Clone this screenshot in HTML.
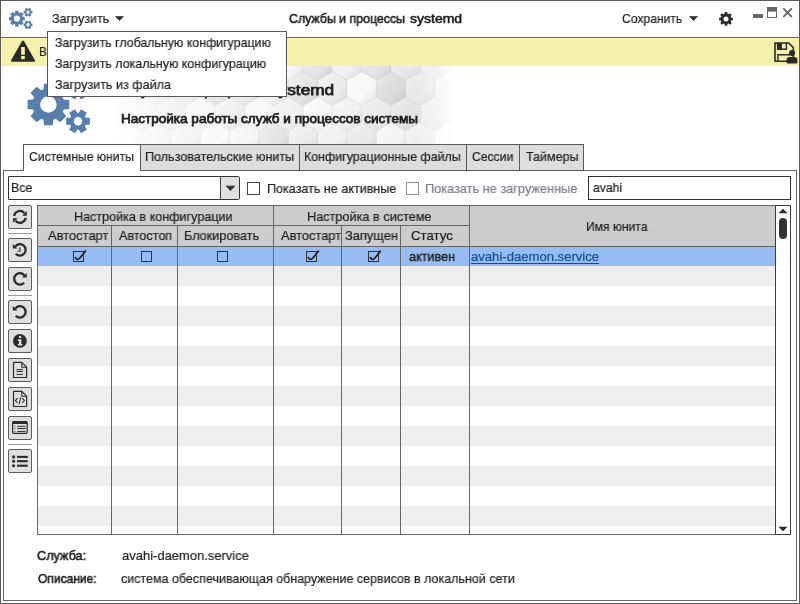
<!DOCTYPE html>
<html lang="ru"><head><meta charset="utf-8"><title>Службы и процессы systemd</title>
<style>
html,body{margin:0;padding:0;background:#fff;}
body{width:800px;height:604px;position:relative;overflow:hidden;font-family:"Liberation Sans", sans-serif;font-size:13px;color:#222;}
.a{position:absolute;box-sizing:border-box;}
.t{position:absolute;white-space:nowrap;line-height:16px;height:16px;transform-origin:0 0;will-change:transform;}
.btn{position:absolute;box-sizing:border-box;left:8px;width:24px;height:24px;background:#dfdfdf;border:1px solid #5c5c5c;border-radius:2px;}
.sep{position:absolute;left:8px;width:24px;height:1px;background:#999;}
.cb{position:absolute;box-sizing:border-box;width:11px;height:11px;border:1px solid #333;}
.vl{position:absolute;width:1px;background:#666;}
.hl{position:absolute;height:1px;background:#666;}
</style></head><body>
<div class="a" style="left:0;top:0;width:800px;height:604px;border:1px solid #5c5c5c;"></div>
<div class="hl" style="left:1px;top:37px;width:798px;background:#666"></div>
<div class="a" style="left:1px;top:38px;width:798px;height:28px;background:#f5f0aa;border-top:1px solid #fbf8b4;border-left:1px solid #fbf8b4"></div>
<svg class="a" style="left:100px;top:66px" width="360" height="78" viewBox="0 0 360 78"><defs><linearGradient id="hg" x1="0" y1="0" x2="1" y2="1"><stop offset="0" stop-color="#fff" stop-opacity=".45"/><stop offset=".5" stop-color="#fff" stop-opacity="0"/><stop offset=".6" stop-color="#000" stop-opacity="0"/><stop offset="1" stop-color="#000" stop-opacity=".08"/></linearGradient><linearGradient id="fade" x1="0" y1="0" x2="1" y2="0"><stop offset="0" stop-color="#fff" stop-opacity="1"/><stop offset="0.03" stop-color="#fff" stop-opacity="1"/><stop offset="0.16" stop-color="#fff" stop-opacity=".55"/><stop offset="0.40" stop-color="#fff" stop-opacity=".15"/><stop offset="0.60" stop-color="#fff" stop-opacity="0"/><stop offset="0.87" stop-color="#fff" stop-opacity="0"/><stop offset="0.93" stop-color="#fff" stop-opacity=".5"/><stop offset="0.985" stop-color="#fff" stop-opacity="1"/><stop offset="1" stop-color="#fff" stop-opacity="1"/></linearGradient></defs><rect width="360" height="78" fill="#ececec"/><polygon points="27.3,5.9 12.7,14.3 -2.0,5.9 -2.0,-11.1 12.6,-19.5 27.3,-11.1" fill="#f7f7f7"/><polygon points="27.3,5.9 12.7,14.3 -2.0,5.9 -2.0,-11.1 12.6,-19.5 27.3,-11.1" fill="url(#hg)" stroke="#000" stroke-opacity=".05" stroke-width="0.8"/><polygon points="56.6,5.9 42.0,14.3 27.3,5.9 27.3,-11.1 42.0,-19.5 56.6,-11.1" fill="#ececec"/><polygon points="56.6,5.9 42.0,14.3 27.3,5.9 27.3,-11.1 42.0,-19.5 56.6,-11.1" fill="url(#hg)" stroke="#000" stroke-opacity=".05" stroke-width="0.8"/><polygon points="85.9,5.9 71.2,14.3 56.6,5.9 56.6,-11.1 71.2,-19.5 85.9,-11.1" fill="#e7e7e7"/><polygon points="85.9,5.9 71.2,14.3 56.6,5.9 56.6,-11.1 71.2,-19.5 85.9,-11.1" fill="url(#hg)" stroke="#000" stroke-opacity=".05" stroke-width="0.8"/><polygon points="115.2,5.9 100.5,14.3 85.9,5.9 85.9,-11.1 100.5,-19.5 115.2,-11.1" fill="#e4e4e4"/><polygon points="115.2,5.9 100.5,14.3 85.9,5.9 85.9,-11.1 100.5,-19.5 115.2,-11.1" fill="url(#hg)" stroke="#000" stroke-opacity=".05" stroke-width="0.8"/><polygon points="144.5,5.9 129.8,14.3 115.2,5.9 115.2,-11.1 129.8,-19.5 144.5,-11.1" fill="#e9e9e9"/><polygon points="144.5,5.9 129.8,14.3 115.2,5.9 115.2,-11.1 129.8,-19.5 144.5,-11.1" fill="url(#hg)" stroke="#000" stroke-opacity=".05" stroke-width="0.8"/><polygon points="173.8,5.9 159.2,14.3 144.5,5.9 144.5,-11.1 159.2,-19.5 173.8,-11.1" fill="#e9e9e9"/><polygon points="173.8,5.9 159.2,14.3 144.5,5.9 144.5,-11.1 159.2,-19.5 173.8,-11.1" fill="url(#hg)" stroke="#000" stroke-opacity=".05" stroke-width="0.8"/><polygon points="203.1,5.9 188.5,14.3 173.8,5.9 173.8,-11.1 188.5,-19.5 203.1,-11.1" fill="#f7f7f7"/><polygon points="203.1,5.9 188.5,14.3 173.8,5.9 173.8,-11.1 188.5,-19.5 203.1,-11.1" fill="url(#hg)" stroke="#000" stroke-opacity=".05" stroke-width="0.8"/><polygon points="232.4,5.9 217.8,14.3 203.1,5.9 203.1,-11.1 217.8,-19.5 232.4,-11.1" fill="#e4e4e4"/><polygon points="232.4,5.9 217.8,14.3 203.1,5.9 203.1,-11.1 217.8,-19.5 232.4,-11.1" fill="url(#hg)" stroke="#000" stroke-opacity=".05" stroke-width="0.8"/><polygon points="261.7,5.9 247.1,14.3 232.4,5.9 232.4,-11.1 247.1,-19.5 261.7,-11.1" fill="#f0f0f0"/><polygon points="261.7,5.9 247.1,14.3 232.4,5.9 232.4,-11.1 247.1,-19.5 261.7,-11.1" fill="url(#hg)" stroke="#000" stroke-opacity=".05" stroke-width="0.8"/><polygon points="291.0,5.9 276.4,14.3 261.7,5.9 261.7,-11.1 276.4,-19.5 291.0,-11.1" fill="#e4e4e4"/><polygon points="291.0,5.9 276.4,14.3 261.7,5.9 261.7,-11.1 276.4,-19.5 291.0,-11.1" fill="url(#hg)" stroke="#000" stroke-opacity=".05" stroke-width="0.8"/><polygon points="320.3,5.9 305.7,14.3 291.0,5.9 291.0,-11.1 305.7,-19.5 320.3,-11.1" fill="#e9e9e9"/><polygon points="320.3,5.9 305.7,14.3 291.0,5.9 291.0,-11.1 305.7,-19.5 320.3,-11.1" fill="url(#hg)" stroke="#000" stroke-opacity=".05" stroke-width="0.8"/><polygon points="349.6,5.9 335.0,14.3 320.3,5.9 320.3,-11.1 335.0,-19.5 349.6,-11.1" fill="#e7e7e7"/><polygon points="349.6,5.9 335.0,14.3 320.3,5.9 320.3,-11.1 335.0,-19.5 349.6,-11.1" fill="url(#hg)" stroke="#000" stroke-opacity=".05" stroke-width="0.8"/><polygon points="378.9,5.9 364.3,14.3 349.6,5.9 349.6,-11.1 364.3,-19.5 378.9,-11.1" fill="#e7e7e7"/><polygon points="378.9,5.9 364.3,14.3 349.6,5.9 349.6,-11.1 364.3,-19.5 378.9,-11.1" fill="url(#hg)" stroke="#000" stroke-opacity=".05" stroke-width="0.8"/><polygon points="12.7,31.2 -2.0,39.7 -16.6,31.2 -16.7,14.3 -2.0,5.9 12.7,14.3" fill="#e9e9e9"/><polygon points="12.7,31.2 -2.0,39.7 -16.6,31.2 -16.7,14.3 -2.0,5.9 12.7,14.3" fill="url(#hg)" stroke="#000" stroke-opacity=".05" stroke-width="0.8"/><polygon points="42.0,31.2 27.3,39.7 12.7,31.2 12.6,14.3 27.3,5.9 42.0,14.3" fill="#f0f0f0"/><polygon points="42.0,31.2 27.3,39.7 12.7,31.2 12.6,14.3 27.3,5.9 42.0,14.3" fill="url(#hg)" stroke="#000" stroke-opacity=".05" stroke-width="0.8"/><polygon points="71.2,31.2 56.6,39.7 42.0,31.2 41.9,14.3 56.6,5.9 71.2,14.3" fill="#e9e9e9"/><polygon points="71.2,31.2 56.6,39.7 42.0,31.2 41.9,14.3 56.6,5.9 71.2,14.3" fill="url(#hg)" stroke="#000" stroke-opacity=".05" stroke-width="0.8"/><polygon points="100.6,31.2 85.9,39.7 71.3,31.2 71.2,14.3 85.9,5.9 100.6,14.3" fill="#e7e7e7"/><polygon points="100.6,31.2 85.9,39.7 71.3,31.2 71.2,14.3 85.9,5.9 100.6,14.3" fill="url(#hg)" stroke="#000" stroke-opacity=".05" stroke-width="0.8"/><polygon points="129.8,31.2 115.2,39.7 100.6,31.2 100.5,14.3 115.2,5.9 129.8,14.3" fill="#e0e0e0"/><polygon points="129.8,31.2 115.2,39.7 100.6,31.2 100.5,14.3 115.2,5.9 129.8,14.3" fill="url(#hg)" stroke="#000" stroke-opacity=".05" stroke-width="0.8"/><polygon points="159.2,31.2 144.5,39.7 129.8,31.2 129.8,14.3 144.5,5.9 159.2,14.3" fill="#e9e9e9"/><polygon points="159.2,31.2 144.5,39.7 129.8,31.2 129.8,14.3 144.5,5.9 159.2,14.3" fill="url(#hg)" stroke="#000" stroke-opacity=".05" stroke-width="0.8"/><polygon points="188.5,31.2 173.8,39.7 159.2,31.2 159.2,14.3 173.8,5.9 188.5,14.3" fill="#f0f0f0"/><polygon points="188.5,31.2 173.8,39.7 159.2,31.2 159.2,14.3 173.8,5.9 188.5,14.3" fill="url(#hg)" stroke="#000" stroke-opacity=".05" stroke-width="0.8"/><polygon points="217.8,31.2 203.1,39.7 188.5,31.2 188.5,14.3 203.1,5.9 217.8,14.3" fill="#e4e4e4"/><polygon points="217.8,31.2 203.1,39.7 188.5,31.2 188.5,14.3 203.1,5.9 217.8,14.3" fill="url(#hg)" stroke="#000" stroke-opacity=".05" stroke-width="0.8"/><polygon points="247.1,31.2 232.4,39.7 217.8,31.2 217.8,14.3 232.4,5.9 247.1,14.3" fill="#ececec"/><polygon points="247.1,31.2 232.4,39.7 217.8,31.2 217.8,14.3 232.4,5.9 247.1,14.3" fill="url(#hg)" stroke="#000" stroke-opacity=".05" stroke-width="0.8"/><polygon points="276.4,31.2 261.7,39.7 247.1,31.2 247.1,14.3 261.7,5.9 276.4,14.3" fill="#f8f8f8"/><polygon points="276.4,31.2 261.7,39.7 247.1,31.2 247.1,14.3 261.7,5.9 276.4,14.3" fill="url(#hg)" stroke="#000" stroke-opacity=".05" stroke-width="0.8"/><polygon points="305.7,31.2 291.0,39.7 276.4,31.2 276.4,14.3 291.0,5.9 305.7,14.3" fill="#dcdcdc"/><polygon points="305.7,31.2 291.0,39.7 276.4,31.2 276.4,14.3 291.0,5.9 305.7,14.3" fill="url(#hg)" stroke="#000" stroke-opacity=".05" stroke-width="0.8"/><polygon points="335.0,31.2 320.3,39.7 305.7,31.2 305.7,14.3 320.3,5.9 335.0,14.3" fill="#e6e6e6"/><polygon points="335.0,31.2 320.3,39.7 305.7,31.2 305.7,14.3 320.3,5.9 335.0,14.3" fill="url(#hg)" stroke="#000" stroke-opacity=".05" stroke-width="0.8"/><polygon points="364.3,31.2 349.6,39.7 335.0,31.2 335.0,14.3 349.6,5.9 364.3,14.3" fill="#ececec"/><polygon points="364.3,31.2 349.6,39.7 335.0,31.2 335.0,14.3 349.6,5.9 364.3,14.3" fill="url(#hg)" stroke="#000" stroke-opacity=".05" stroke-width="0.8"/><polygon points="393.6,31.2 378.9,39.7 364.3,31.2 364.3,14.3 378.9,5.9 393.6,14.3" fill="#f4f4f4"/><polygon points="393.6,31.2 378.9,39.7 364.3,31.2 364.3,14.3 378.9,5.9 393.6,14.3" fill="url(#hg)" stroke="#000" stroke-opacity=".05" stroke-width="0.8"/><polygon points="27.3,56.6 12.7,65.1 -2.0,56.6 -2.0,39.7 12.6,31.2 27.3,39.7" fill="#e7e7e7"/><polygon points="27.3,56.6 12.7,65.1 -2.0,56.6 -2.0,39.7 12.6,31.2 27.3,39.7" fill="url(#hg)" stroke="#000" stroke-opacity=".05" stroke-width="0.8"/><polygon points="56.6,56.6 42.0,65.1 27.3,56.6 27.3,39.7 42.0,31.2 56.6,39.7" fill="#ececec"/><polygon points="56.6,56.6 42.0,65.1 27.3,56.6 27.3,39.7 42.0,31.2 56.6,39.7" fill="url(#hg)" stroke="#000" stroke-opacity=".05" stroke-width="0.8"/><polygon points="85.9,56.6 71.2,65.1 56.6,56.6 56.6,39.7 71.2,31.2 85.9,39.7" fill="#e9e9e9"/><polygon points="85.9,56.6 71.2,65.1 56.6,56.6 56.6,39.7 71.2,31.2 85.9,39.7" fill="url(#hg)" stroke="#000" stroke-opacity=".05" stroke-width="0.8"/><polygon points="115.2,56.6 100.5,65.1 85.9,56.6 85.9,39.7 100.5,31.2 115.2,39.7" fill="#f4f4f4"/><polygon points="115.2,56.6 100.5,65.1 85.9,56.6 85.9,39.7 100.5,31.2 115.2,39.7" fill="url(#hg)" stroke="#000" stroke-opacity=".05" stroke-width="0.8"/><polygon points="144.5,56.6 129.8,65.1 115.2,56.6 115.2,39.7 129.8,31.2 144.5,39.7" fill="#ececec"/><polygon points="144.5,56.6 129.8,65.1 115.2,56.6 115.2,39.7 129.8,31.2 144.5,39.7" fill="url(#hg)" stroke="#000" stroke-opacity=".05" stroke-width="0.8"/><polygon points="173.8,56.6 159.2,65.1 144.5,56.6 144.5,39.7 159.2,31.2 173.8,39.7" fill="#f6f6f6"/><polygon points="173.8,56.6 159.2,65.1 144.5,56.6 144.5,39.7 159.2,31.2 173.8,39.7" fill="url(#hg)" stroke="#000" stroke-opacity=".05" stroke-width="0.8"/><polygon points="203.1,56.6 188.5,65.1 173.8,56.6 173.8,39.7 188.5,31.2 203.1,39.7" fill="#f0f0f0"/><polygon points="203.1,56.6 188.5,65.1 173.8,56.6 173.8,39.7 188.5,31.2 203.1,39.7" fill="url(#hg)" stroke="#000" stroke-opacity=".05" stroke-width="0.8"/><polygon points="232.4,56.6 217.8,65.1 203.1,56.6 203.1,39.7 217.8,31.2 232.4,39.7" fill="#f7f7f7"/><polygon points="232.4,56.6 217.8,65.1 203.1,56.6 203.1,39.7 217.8,31.2 232.4,39.7" fill="url(#hg)" stroke="#000" stroke-opacity=".05" stroke-width="0.8"/><polygon points="261.7,56.6 247.1,65.1 232.4,56.6 232.4,39.7 247.1,31.2 261.7,39.7" fill="#f1f1f1"/><polygon points="261.7,56.6 247.1,65.1 232.4,56.6 232.4,39.7 247.1,31.2 261.7,39.7" fill="url(#hg)" stroke="#000" stroke-opacity=".05" stroke-width="0.8"/><polygon points="291.0,56.6 276.4,65.1 261.7,56.6 261.7,39.7 276.4,31.2 291.0,39.7" fill="#eaeaea"/><polygon points="291.0,56.6 276.4,65.1 261.7,56.6 261.7,39.7 276.4,31.2 291.0,39.7" fill="url(#hg)" stroke="#000" stroke-opacity=".05" stroke-width="0.8"/><polygon points="320.3,56.6 305.7,65.1 291.0,56.6 291.0,39.7 305.7,31.2 320.3,39.7" fill="#e3e3e3"/><polygon points="320.3,56.6 305.7,65.1 291.0,56.6 291.0,39.7 305.7,31.2 320.3,39.7" fill="url(#hg)" stroke="#000" stroke-opacity=".05" stroke-width="0.8"/><polygon points="349.6,56.6 335.0,65.1 320.3,56.6 320.3,39.7 335.0,31.2 349.6,39.7" fill="#e8e8e8"/><polygon points="349.6,56.6 335.0,65.1 320.3,56.6 320.3,39.7 335.0,31.2 349.6,39.7" fill="url(#hg)" stroke="#000" stroke-opacity=".05" stroke-width="0.8"/><polygon points="378.9,56.6 364.3,65.1 349.6,56.6 349.6,39.7 364.3,31.2 378.9,39.7" fill="#eeeeee"/><polygon points="378.9,56.6 364.3,65.1 349.6,56.6 349.6,39.7 364.3,31.2 378.9,39.7" fill="url(#hg)" stroke="#000" stroke-opacity=".05" stroke-width="0.8"/><polygon points="12.7,82.0 -2.0,90.4 -16.6,82.0 -16.7,65.1 -2.0,56.6 12.7,65.1" fill="#e7e7e7"/><polygon points="12.7,82.0 -2.0,90.4 -16.6,82.0 -16.7,65.1 -2.0,56.6 12.7,65.1" fill="url(#hg)" stroke="#000" stroke-opacity=".05" stroke-width="0.8"/><polygon points="42.0,82.0 27.3,90.4 12.7,82.0 12.6,65.1 27.3,56.6 42.0,65.1" fill="#f7f7f7"/><polygon points="42.0,82.0 27.3,90.4 12.7,82.0 12.6,65.1 27.3,56.6 42.0,65.1" fill="url(#hg)" stroke="#000" stroke-opacity=".05" stroke-width="0.8"/><polygon points="71.2,82.0 56.6,90.4 42.0,82.0 41.9,65.1 56.6,56.6 71.2,65.1" fill="#eeeeee"/><polygon points="71.2,82.0 56.6,90.4 42.0,82.0 41.9,65.1 56.6,56.6 71.2,65.1" fill="url(#hg)" stroke="#000" stroke-opacity=".05" stroke-width="0.8"/><polygon points="100.6,82.0 85.9,90.4 71.3,82.0 71.2,65.1 85.9,56.6 100.6,65.1" fill="#eeeeee"/><polygon points="100.6,82.0 85.9,90.4 71.3,82.0 71.2,65.1 85.9,56.6 100.6,65.1" fill="url(#hg)" stroke="#000" stroke-opacity=".05" stroke-width="0.8"/><polygon points="129.8,82.0 115.2,90.4 100.6,82.0 100.5,65.1 115.2,56.6 129.8,65.1" fill="#f7f7f7"/><polygon points="129.8,82.0 115.2,90.4 100.6,82.0 100.5,65.1 115.2,56.6 129.8,65.1" fill="url(#hg)" stroke="#000" stroke-opacity=".05" stroke-width="0.8"/><polygon points="159.2,82.0 144.5,90.4 129.8,82.0 129.8,65.1 144.5,56.6 159.2,65.1" fill="#f4f4f4"/><polygon points="159.2,82.0 144.5,90.4 129.8,82.0 129.8,65.1 144.5,56.6 159.2,65.1" fill="url(#hg)" stroke="#000" stroke-opacity=".05" stroke-width="0.8"/><polygon points="188.5,82.0 173.8,90.4 159.2,82.0 159.2,65.1 173.8,56.6 188.5,65.1" fill="#e2e2e2"/><polygon points="188.5,82.0 173.8,90.4 159.2,82.0 159.2,65.1 173.8,56.6 188.5,65.1" fill="url(#hg)" stroke="#000" stroke-opacity=".05" stroke-width="0.8"/><polygon points="217.8,82.0 203.1,90.4 188.5,82.0 188.5,65.1 203.1,56.6 217.8,65.1" fill="#ececec"/><polygon points="217.8,82.0 203.1,90.4 188.5,82.0 188.5,65.1 203.1,56.6 217.8,65.1" fill="url(#hg)" stroke="#000" stroke-opacity=".05" stroke-width="0.8"/><polygon points="247.1,82.0 232.4,90.4 217.8,82.0 217.8,65.1 232.4,56.6 247.1,65.1" fill="#f0f0f0"/><polygon points="247.1,82.0 232.4,90.4 217.8,82.0 217.8,65.1 232.4,56.6 247.1,65.1" fill="url(#hg)" stroke="#000" stroke-opacity=".05" stroke-width="0.8"/><polygon points="276.4,82.0 261.7,90.4 247.1,82.0 247.1,65.1 261.7,56.6 276.4,65.1" fill="#e9e9e9"/><polygon points="276.4,82.0 261.7,90.4 247.1,82.0 247.1,65.1 261.7,56.6 276.4,65.1" fill="url(#hg)" stroke="#000" stroke-opacity=".05" stroke-width="0.8"/><polygon points="305.7,82.0 291.0,90.4 276.4,82.0 276.4,65.1 291.0,56.6 305.7,65.1" fill="#f4f4f4"/><polygon points="305.7,82.0 291.0,90.4 276.4,82.0 276.4,65.1 291.0,56.6 305.7,65.1" fill="url(#hg)" stroke="#000" stroke-opacity=".05" stroke-width="0.8"/><polygon points="335.0,82.0 320.3,90.4 305.7,82.0 305.7,65.1 320.3,56.6 335.0,65.1" fill="#eeeeee"/><polygon points="335.0,82.0 320.3,90.4 305.7,82.0 305.7,65.1 320.3,56.6 335.0,65.1" fill="url(#hg)" stroke="#000" stroke-opacity=".05" stroke-width="0.8"/><polygon points="364.3,82.0 349.6,90.4 335.0,82.0 335.0,65.1 349.6,56.6 364.3,65.1" fill="#f7f7f7"/><polygon points="364.3,82.0 349.6,90.4 335.0,82.0 335.0,65.1 349.6,56.6 364.3,65.1" fill="url(#hg)" stroke="#000" stroke-opacity=".05" stroke-width="0.8"/><polygon points="393.6,82.0 378.9,90.4 364.3,82.0 364.3,65.1 378.9,56.6 393.6,65.1" fill="#eeeeee"/><polygon points="393.6,82.0 378.9,90.4 364.3,82.0 364.3,65.1 378.9,56.6 393.6,65.1" fill="url(#hg)" stroke="#000" stroke-opacity=".05" stroke-width="0.8"/><rect width="360" height="78" fill="url(#fade)"/></svg>
<div class="a" style="left:3px;top:170px;width:794px;height:431px;border:1px solid #666;"></div>
<div class="a" style="left:140px;top:144px;width:444px;height:27px;background:#dddddd;border:1px solid #5a5a5a;"></div>
<div class="vl" style="left:299px;top:145px;height:25px;background:#5a5a5a"></div>
<div class="vl" style="left:466px;top:145px;height:25px;background:#5a5a5a"></div>
<div class="vl" style="left:519px;top:145px;height:25px;background:#5a5a5a"></div>
<div class="a" style="left:23px;top:144px;width:118px;height:27px;background:#fff;border:1px solid #5a5a5a;border-bottom:none;"></div>
<div class="a" style="left:8px;top:176px;width:232px;height:24px;background:#fff;border:1px solid #333;border-radius:0 2px 2px 0;"></div>
<div class="a" style="left:220px;top:177px;width:19px;height:22px;background:#dedede;border-left:1px solid #444;border-radius:0 1px 1px 0;"></div>
<svg class="a" style="left:225px;top:185px" width="11" height="7" viewBox="0 0 11 7"><path d="M0.5,0.8 L10.5,0.8 L5.5,6 Z" fill="#333"/></svg>
<div class="a" style="left:247px;top:182px;width:13px;height:13px;background:#fff;border:1px solid #444;"></div>
<div class="a" style="left:406px;top:182px;width:13px;height:13px;background:#fff;border:1px solid #8c8c9a;"></div>
<div class="a" style="left:588px;top:176px;width:203px;height:24px;background:#fff;border:1px solid #333;"></div>
<div class="btn" style="top:205px"></div>
<div class="btn" style="top:238px"></div>
<div class="btn" style="top:267px"></div>
<div class="btn" style="top:300px"></div>
<div class="btn" style="top:329px"></div>
<div class="btn" style="top:358px"></div>
<div class="btn" style="top:387px"></div>
<div class="btn" style="top:416px"></div>
<div class="btn" style="top:449px"></div>
<div class="sep" style="top:233px"></div>
<div class="sep" style="top:295px"></div>
<div class="sep" style="top:444px"></div>
<div class="a" style="left:37px;top:205px;width:754px;height:330px;background:#fff;border:1px solid #666;"></div>
<div class="a" style="left:38px;top:206px;width:737px;height:40px;background:#cccccc;"></div>
<div class="a" style="left:38px;top:247px;width:737px;height:19px;background:#96bcf2;"></div>
<div class="a" style="left:38px;top:266px;width:737px;height:20px;background:#eeeeee;"></div>
<div class="a" style="left:38px;top:306px;width:737px;height:20px;background:#eeeeee;"></div>
<div class="a" style="left:38px;top:346px;width:737px;height:20px;background:#eeeeee;"></div>
<div class="a" style="left:38px;top:386px;width:737px;height:20px;background:#eeeeee;"></div>
<div class="a" style="left:38px;top:426px;width:737px;height:20px;background:#eeeeee;"></div>
<div class="a" style="left:38px;top:466px;width:737px;height:20px;background:#eeeeee;"></div>
<div class="a" style="left:38px;top:506px;width:737px;height:20px;background:#eeeeee;"></div>
<div class="hl" style="left:38px;top:225px;width:431px"></div>
<div class="hl" style="left:38px;top:246px;width:737px"></div>
<div class="vl" style="left:273px;top:206px;height:328px"></div>
<div class="vl" style="left:469px;top:206px;height:328px"></div>
<div class="vl" style="left:111px;top:226px;height:308px"></div>
<div class="vl" style="left:177px;top:226px;height:308px"></div>
<div class="vl" style="left:341px;top:226px;height:308px"></div>
<div class="vl" style="left:400px;top:226px;height:308px"></div>
<div class="a" style="left:775px;top:205px;width:16px;height:330px;background:#fff;border:1px solid #3c3c3c;"></div>
<svg class="a" style="left:778px;top:208px" width="10" height="6" viewBox="0 0 10 6"><path d="M0.9,5 L5,0.9 L9.1,5Z" fill="#2b2b2b" stroke="#2b2b2b" stroke-width="0.5" stroke-linejoin="round"/></svg>
<svg class="a" style="left:778px;top:526px" width="10" height="6" viewBox="0 0 10 6"><path d="M0.9,1 L5,5.1 L9.1,1Z" fill="#2b2b2b" stroke="#2b2b2b" stroke-width="0.5" stroke-linejoin="round"/></svg>
<div class="a" style="left:779px;top:218px;width:8px;height:21px;background:#333;border-radius:4px;"></div>
<div class="cb" style="left:73px;top:251px"></div>
<svg class="a" style="left:73px;top:248px" width="15" height="15" viewBox="0 0 15 15"><path d="M2.5,9.6 C3.2,11.3 4.6,11.9 5.9,10.9 C7.7,9.4 10,6.2 12.4,3.1" fill="none" stroke="#222" stroke-width="1.8" stroke-linecap="round"/></svg>
<div class="cb" style="left:141px;top:251px"></div>
<div class="cb" style="left:217px;top:251px"></div>
<div class="cb" style="left:306px;top:251px"></div>
<svg class="a" style="left:306px;top:248px" width="15" height="15" viewBox="0 0 15 15"><path d="M2.5,9.6 C3.2,11.3 4.6,11.9 5.9,10.9 C7.7,9.4 10,6.2 12.4,3.1" fill="none" stroke="#222" stroke-width="1.8" stroke-linecap="round"/></svg>
<div class="cb" style="left:368px;top:251px"></div>
<svg class="a" style="left:368px;top:248px" width="15" height="15" viewBox="0 0 15 15"><path d="M2.5,9.6 C3.2,11.3 4.6,11.9 5.9,10.9 C7.7,9.4 10,6.2 12.4,3.1" fill="none" stroke="#222" stroke-width="1.8" stroke-linecap="round"/></svg>
<svg class="a" style="left:115px;top:16px" width="9" height="6" viewBox="0 0 9 6"><path d="M0.5,0.4 L8.5,0.4 L4.5,4.6Z" fill="#303030" stroke="#303030" stroke-width="0.7" stroke-linejoin="round"/></svg>
<svg class="a" style="left:689px;top:16px" width="9" height="6" viewBox="0 0 9 6"><path d="M0.5,0.4 L8.5,0.4 L4.5,4.6Z" fill="#303030" stroke="#303030" stroke-width="0.7" stroke-linejoin="round"/></svg>
<svg class="a" style="left:0;top:0" width="800" height="604" viewBox="0 0 800 604"><path d="M63.71,99.52 L69.24,100.12 L69.24,108.88 L63.71,109.48 L62.75,111.81 L66.24,116.14 L60.04,122.34 L55.71,118.85 L53.38,119.81 L52.78,125.34 L44.02,125.34 L43.42,119.81 L41.09,118.85 L36.76,122.34 L30.56,116.14 L34.05,111.81 L33.09,109.48 L27.56,108.88 L27.56,100.12 L33.09,99.52 L34.05,97.19 L30.56,92.86 L36.76,86.66 L41.09,90.15 L43.42,89.19 L44.02,83.66 L52.78,83.66 L53.38,89.19 L55.71,90.15 L60.04,86.66 L66.24,92.86 L62.75,97.19Z M56.70,104.50 A8.30,8.30 0 1,0 40.10,104.50 A8.30,8.30 0 1,0 56.70,104.50Z M85.86,117.70 L89.80,117.74 L89.80,124.66 L85.86,124.70 L84.96,126.25 L86.90,129.69 L80.91,133.15 L78.90,129.75 L77.10,129.75 L75.09,133.15 L69.10,129.69 L71.04,126.25 L70.14,124.70 L66.20,124.66 L66.20,117.74 L70.14,117.70 L71.04,116.15 L69.10,112.71 L75.09,109.25 L77.10,112.65 L78.90,112.65 L80.91,109.25 L86.90,112.71 L84.96,116.15Z M82.20,121.20 A4.20,4.20 0 1,0 73.80,121.20 A4.20,4.20 0 1,0 82.20,121.20Z M85.86,84.00 L89.80,84.04 L89.80,90.96 L85.86,91.00 L84.96,92.55 L86.90,95.99 L80.91,99.45 L78.90,96.05 L77.10,96.05 L75.09,99.45 L69.10,95.99 L71.04,92.55 L70.14,91.00 L66.20,90.96 L66.20,84.04 L70.14,84.00 L71.04,82.45 L69.10,79.01 L75.09,75.55 L77.10,78.95 L78.90,78.95 L80.91,75.55 L86.90,79.01 L84.96,82.45Z M82.20,87.50 A4.20,4.20 0 1,0 73.80,87.50 A4.20,4.20 0 1,0 82.20,87.50Z" fill="#587eab" fill-rule="evenodd"/><path d="M22.64,16.73 L24.72,16.96 L24.72,20.24 L22.64,20.47 L22.28,21.34 L23.59,22.96 L21.26,25.29 L19.64,23.98 L18.77,24.34 L18.54,26.42 L15.26,26.42 L15.03,24.34 L14.16,23.98 L12.54,25.29 L10.21,22.96 L11.52,21.34 L11.16,20.47 L9.08,20.24 L9.08,16.96 L11.16,16.73 L11.52,15.86 L10.21,14.24 L12.54,11.91 L14.16,13.22 L15.03,12.86 L15.26,10.78 L18.54,10.78 L18.77,12.86 L19.64,13.22 L21.26,11.91 L23.59,14.24 L22.28,15.86Z M20.01,18.60 A3.11,3.11 0 1,0 13.79,18.60 A3.11,3.11 0 1,0 20.01,18.60Z M30.95,23.55 L32.43,23.57 L32.43,26.16 L30.95,26.17 L30.61,26.76 L31.34,28.05 L29.09,29.34 L28.34,28.07 L27.66,28.07 L26.91,29.34 L24.66,28.05 L25.39,26.76 L25.05,26.17 L23.57,26.16 L23.57,23.57 L25.05,23.55 L25.39,22.97 L24.66,21.68 L26.91,20.38 L27.66,21.66 L28.34,21.66 L29.09,20.38 L31.34,21.68 L30.61,22.97Z M29.57,24.86 A1.58,1.58 0 1,0 26.43,24.86 A1.58,1.58 0 1,0 29.57,24.86Z M30.95,10.91 L32.43,10.93 L32.43,13.52 L30.95,13.54 L30.61,14.12 L31.34,15.41 L29.09,16.71 L28.34,15.43 L27.66,15.43 L26.91,16.71 L24.66,15.41 L25.39,14.12 L25.05,13.54 L23.57,13.52 L23.57,10.93 L25.05,10.91 L25.39,10.33 L24.66,9.04 L26.91,7.74 L27.66,9.02 L28.34,9.02 L29.09,7.74 L31.34,9.04 L30.61,10.33Z M29.57,12.23 A1.58,1.58 0 1,0 26.43,12.23 A1.58,1.58 0 1,0 29.57,12.23Z" fill="#587eab" fill-rule="evenodd"/><path d="M23,41.6 L34,60.7 L12,60.7Z" fill="#2b2b2b" stroke="#2b2b2b" stroke-width="2.2" stroke-linejoin="round"/><rect x="21.2" y="47" width="3.6" height="7.8" fill="#f5f0aa"/><rect x="21.2" y="56" width="3.6" height="3.2" fill="#f5f0aa"/><path d="M731.08,17.38 L732.89,17.65 L732.89,20.15 L731.08,20.42 L730.66,21.42 L731.76,22.88 L729.98,24.66 L728.52,23.56 L727.52,23.98 L727.25,25.79 L724.75,25.79 L724.48,23.98 L723.48,23.56 L722.02,24.66 L720.24,22.88 L721.34,21.42 L720.92,20.42 L719.11,20.15 L719.11,17.65 L720.92,17.38 L721.34,16.38 L720.24,14.92 L722.02,13.14 L723.48,14.24 L724.48,13.82 L724.75,12.01 L727.25,12.01 L727.52,13.82 L728.52,14.24 L729.98,13.14 L731.76,14.92 L730.66,16.38Z M728.50,18.90 A2.50,2.50 0 1,0 723.50,18.90 A2.50,2.50 0 1,0 728.50,18.90Z" fill="#2b2b2b" fill-rule="evenodd"/><path d="M775,43 L788.8,43 L793.3,47.6 L793.3,61.2 L775,61.2Z" fill="none" stroke="#2b2b2b" stroke-width="1.6" stroke-linejoin="round"/><path d="M777.6,43 L777.6,49.2 L786.4,49.2 L786.4,43" fill="none" stroke="#2b2b2b" stroke-width="1.4"/><rect x="777.6" y="43" width="4.4" height="6.2" fill="#2b2b2b"/><path d="M777.9,61 L777.9,54.8 L790,54.8" fill="none" stroke="#2b2b2b" stroke-width="1.4"/><circle cx="792" cy="53.1" r="3.05" fill="#2b2b2b"/><path d="M786.6,62.2 L786.6,59.6 Q786.6,56.9 789.3,56.9 L794.7,56.9 Q797.4,56.9 797.4,59.6 L797.4,62.2 Q797.4,63.6 796,63.6 L788,63.6 Q786.6,63.6 786.6,62.2Z" fill="#2b2b2b"/><rect x="753" y="14" width="10" height="4" fill="#666"/><rect x="767.5" y="7.5" width="9" height="10" fill="#fff" stroke="#666" stroke-width="1"/><rect x="767" y="7" width="10" height="4.6" fill="#666"/><path d="M783.9,8.9 L791.3,16.3 M791.3,8.9 L783.9,16.3" stroke="#666" stroke-width="1.9" stroke-linecap="round" fill="none"/><path d="M14.09,215.88 A5.9,5.9 0 0,1 24.28,212.95" fill="none" stroke="#2b2b2b" stroke-width="2.3"/><polygon points="26.8,211.1 26.8,215.7 22.2,215.7" fill="#2b2b2b"/><path d="M25.71,217.92 A5.9,5.9 0 0,1 15.52,220.85" fill="none" stroke="#2b2b2b" stroke-width="2.3"/><polygon points="13.0,218.2 17.6,218.2 13.0,222.8" fill="#2b2b2b"/><path d="M15.23,246.63 A5.7,5.7 0 1,1 15.73,253.79" fill="none" stroke="#2b2b2b" stroke-width="2.3"/><polygon points="12.74,244.07 12.74,248.60 17.5,248.60" fill="#2b2b2b"/><path d="M19.9,247.20 L19.9,251.20 L17.70,251.20" fill="none" stroke="#2b2b2b" stroke-width="1.1"/><path d="M15.23,308.63 A5.7,5.7 0 1,1 15.73,315.79" fill="none" stroke="#2b2b2b" stroke-width="2.3"/><polygon points="12.74,306.07 12.74,310.60 17.5,310.60" fill="#2b2b2b"/><path d="M24.57,275.63 A5.7,5.7 0 1,0 24.07,282.79" fill="none" stroke="#2b2b2b" stroke-width="2.3"/><polygon points="26.8,273.07 26.8,277.60 22.0,277.60" fill="#2b2b2b"/><circle cx="19.9" cy="340.9" r="6.9" fill="#2b2b2b"/><path d="M19.0,336.0 h2.2 v2 h-2.2z M17.9,339.29999999999995 h3.4 v4.6 h1.1 v1.7 h-4.6 v-1.7 h1.2 v-2.9 h-1.2z" fill="#e0e0e0"/><path d="M13.5,362.4 L21.8,362.4 L26.6,367.2 L26.6,377.5 L13.5,377.5Z" fill="none" stroke="#2b2b2b" stroke-width="1.2" stroke-linejoin="round"/><path d="M21.8,362.4 L21.8,367.2 L26.6,367.2" fill="none" stroke="#2b2b2b" stroke-width="1.1"/><path d="M16.5,369.6 H22.9" stroke="#2b2b2b" stroke-width="1"/><path d="M16.5,371.5 H22.9" stroke="#2b2b2b" stroke-width="1"/><path d="M16.5,374.4 H22.9" stroke="#2b2b2b" stroke-width="1"/><path d="M13.5,391.4 L21.8,391.4 L26.6,396.2 L26.6,406.5 L13.5,406.5Z" fill="none" stroke="#2b2b2b" stroke-width="1.2" stroke-linejoin="round"/><path d="M21.8,391.4 L21.8,396.2 L26.6,396.2" fill="none" stroke="#2b2b2b" stroke-width="1.1"/><path d="M17.6,398.20000000000005 L15.4,400.6 L17.6,403.0 M22.2,398.20000000000005 L24.4,400.6 L22.2,403.0 M20.6,397.3 L19.3,403.90000000000003" fill="none" stroke="#2b2b2b" stroke-width="1.1"/><rect x="12.6" y="421.6" width="14.6" height="11.8" rx="1.2" fill="none" stroke="#2b2b2b" stroke-width="1.2"/><rect x="12.6" y="421.3" width="14.6" height="2.7" rx="0.8" fill="#2b2b2b"/><path d="M17.2,426.3 H25.7" stroke="#2b2b2b" stroke-width="1"/><path d="M14.2,426.3 H15.4" stroke="#2b2b2b" stroke-width="0.8"/><path d="M17.2,428.5 H25.7" stroke="#2b2b2b" stroke-width="1"/><path d="M14.2,428.5 H15.4" stroke="#2b2b2b" stroke-width="0.8"/><path d="M17.2,431.4 H25.7" stroke="#2b2b2b" stroke-width="1"/><path d="M14.2,431.4 H15.4" stroke="#2b2b2b" stroke-width="0.8"/><rect x="17" y="455.85" width="10.8" height="2.1" fill="#2b2b2b"/><circle cx="13.6" cy="456.9" r="1.55" fill="#2b2b2b"/><rect x="17" y="460.15" width="10.8" height="2.1" fill="#2b2b2b"/><circle cx="13.6" cy="461.2" r="1.55" fill="#2b2b2b"/><rect x="17" y="464.65" width="10.8" height="2.1" fill="#2b2b2b"/><circle cx="13.6" cy="465.7" r="1.55" fill="#2b2b2b"/></svg>
<span class="t" style="left:51.72px;top:10.50px;font-size:13px;font-weight:normal;-webkit-text-stroke:0.2px;color:#1e1e1e;transform:scaleX(0.9645);">Загрузить</span>
<span class="t" style="left:289.30px;top:10.50px;font-size:13px;font-weight:normal;-webkit-text-stroke:0.55px;color:#1e1e1e;transform:scaleX(0.9500);">Службы и процессы</span>
<span class="t" style="left:410.35px;top:10.50px;font-size:13px;font-weight:normal;-webkit-text-stroke:0.55px;color:#1e1e1e;transform:scaleX(1.0775);">systemd</span>
<span class="t" style="left:621.72px;top:10.50px;font-size:13px;font-weight:normal;-webkit-text-stroke:0.2px;color:#1e1e1e;transform:scaleX(0.9332);">Сохранить</span>
<span class="t" style="left:121.29px;top:81.98px;font-size:14.5px;font-weight:normal;-webkit-text-stroke:0.75px;color:#1e1e1e;transform:scaleX(1.0543);">Службы и процессы</span>
<span class="t" style="left:270.34px;top:81.98px;font-size:14.5px;font-weight:normal;-webkit-text-stroke:0.75px;color:#1e1e1e;transform:scaleX(1.1886);">systemd</span>
<span class="t" style="left:121.40px;top:110.50px;font-size:13px;font-weight:normal;-webkit-text-stroke:0.75px;color:#1e1e1e;transform:scaleX(1.0406);">Настройка работы служб и процессов системы</span>
<span class="t" style="left:29.22px;top:148.50px;font-size:13px;font-weight:normal;-webkit-text-stroke:0.2px;color:#1e1e1e;transform:scaleX(0.9358);">Системные юниты</span>
<span class="t" style="left:144.97px;top:148.50px;font-size:13px;font-weight:normal;-webkit-text-stroke:0.2px;color:#1e1e1e;transform:scaleX(0.9680);">Пользовательские юниты</span>
<span class="t" style="left:304.47px;top:148.50px;font-size:13px;font-weight:normal;-webkit-text-stroke:0.2px;color:#1e1e1e;transform:scaleX(0.9546);">Конфигурационные файлы</span>
<span class="t" style="left:472.22px;top:148.50px;font-size:13px;font-weight:normal;-webkit-text-stroke:0.2px;color:#1e1e1e;transform:scaleX(0.9373);">Сессии</span>
<span class="t" style="left:525.61px;top:148.50px;font-size:13px;font-weight:normal;-webkit-text-stroke:0.2px;color:#1e1e1e;transform:scaleX(0.9632);">Таймеры</span>
<span class="t" style="left:11.47px;top:179.50px;font-size:13px;font-weight:normal;-webkit-text-stroke:0.2px;color:#1e1e1e;transform:scaleX(0.9527);">Все</span>
<span class="t" style="left:266.57px;top:180.50px;font-size:13px;font-weight:normal;-webkit-text-stroke:0.2px;color:#1e1e1e;transform:scaleX(0.9663);">Показать не активные</span>
<span class="t" style="left:425.46px;top:180.50px;font-size:13px;font-weight:normal;-webkit-text-stroke:0.2px;color:#7d7d8a;transform:scaleX(0.9804);">Показать не загруженные</span>
<span class="t" style="left:593.24px;top:179.50px;font-size:13px;font-weight:normal;-webkit-text-stroke:0.2px;color:#1e1e1e;transform:scaleX(0.9357);">avahi</span>
<span class="t" style="left:74.21px;top:208.50px;font-size:13px;font-weight:normal;-webkit-text-stroke:0.2px;color:#1e1e1e;transform:scaleX(0.9676);">Настройка в конфигурации</span>
<span class="t" style="left:307.20px;top:208.50px;font-size:13px;font-weight:normal;-webkit-text-stroke:0.2px;color:#1e1e1e;transform:scaleX(0.9761);">Настройка в системе</span>
<span class="t" style="left:47.62px;top:227.50px;font-size:13px;font-weight:normal;-webkit-text-stroke:0.2px;color:#1e1e1e;transform:scaleX(0.9932);">Автостарт</span>
<span class="t" style="left:119.12px;top:227.50px;font-size:13px;font-weight:normal;-webkit-text-stroke:0.2px;color:#1e1e1e;transform:scaleX(0.9686);">Автостоп</span>
<span class="t" style="left:184.45px;top:227.50px;font-size:13px;font-weight:normal;-webkit-text-stroke:0.2px;color:#1e1e1e;transform:scaleX(0.9730);">Блокировать</span>
<span class="t" style="left:280.62px;top:227.50px;font-size:13px;font-weight:normal;-webkit-text-stroke:0.2px;color:#1e1e1e;transform:scaleX(0.9891);">Автостарт</span>
<span class="t" style="left:345.21px;top:227.50px;font-size:13px;font-weight:normal;-webkit-text-stroke:0.2px;color:#1e1e1e;transform:scaleX(0.9880);">Запущен</span>
<span class="t" style="left:410.95px;top:227.50px;font-size:13px;font-weight:normal;-webkit-text-stroke:0.2px;color:#1e1e1e;transform:scaleX(1.0183);">Статус</span>
<span class="t" style="left:586.00px;top:218.50px;font-size:13px;font-weight:normal;-webkit-text-stroke:0.2px;color:#1e1e1e;transform:scaleX(0.9296);">Имя юнита</span>
<span class="t" style="left:408.79px;top:248.50px;font-size:13px;font-weight:normal;-webkit-text-stroke:0.4px;color:#1e1e1e;transform:scaleX(0.9696);">активен</span>
<span class="t" style="left:470.98px;top:248.50px;font-size:13px;font-weight:normal;-webkit-text-stroke:0.2px;color:#124f98;transform:scaleX(1.0070);text-decoration:underline;text-decoration-thickness:1.2px;text-underline-offset:2px;">avahi-daemon.service</span>
<span class="t" style="left:37.49px;top:547.50px;font-size:13px;font-weight:normal;-webkit-text-stroke:0.55px;color:#1e1e1e;transform:scaleX(0.9744);">Служба:</span>
<span class="t" style="left:121.73px;top:547.50px;font-size:13px;font-weight:normal;-webkit-text-stroke:0.2px;color:#1e1e1e;transform:scaleX(0.9971);">avahi-daemon.service</span>
<span class="t" style="left:37.52px;top:570.50px;font-size:13px;font-weight:normal;-webkit-text-stroke:0.55px;color:#1e1e1e;transform:scaleX(0.9235);">Описание:</span>
<span class="t" style="left:121.00px;top:570.50px;font-size:13px;font-weight:normal;-webkit-text-stroke:0.2px;color:#1e1e1e;transform:scaleX(0.9605);">система обеспечивающая обнаружение сервисов в локальной сети</span>
<span class="t" style="left:39.03px;top:43.50px;font-size:13px;font-weight:normal;-webkit-text-stroke:0.2px;color:#1e1e1e;transform:scaleX(0.9034);">В</span>
<div class="a" style="left:47px;top:31px;width:240px;height:66px;background:#fff;border:1px solid #585858;"></div>
<span class="t" style="left:54.97px;top:34.50px;font-size:13px;font-weight:normal;-webkit-text-stroke:0.2px;color:#1e1e1e;transform:scaleX(0.9533);">Загрузить глобальную конфигурацию</span>
<span class="t" style="left:54.97px;top:55.50px;font-size:13px;font-weight:normal;-webkit-text-stroke:0.2px;color:#1e1e1e;transform:scaleX(0.9562);">Загрузить локальную конфигурацию</span>
<span class="t" style="left:54.97px;top:76.50px;font-size:13px;font-weight:normal;-webkit-text-stroke:0.2px;color:#1e1e1e;transform:scaleX(0.9681);">Загрузить из файла</span>
</body></html>
